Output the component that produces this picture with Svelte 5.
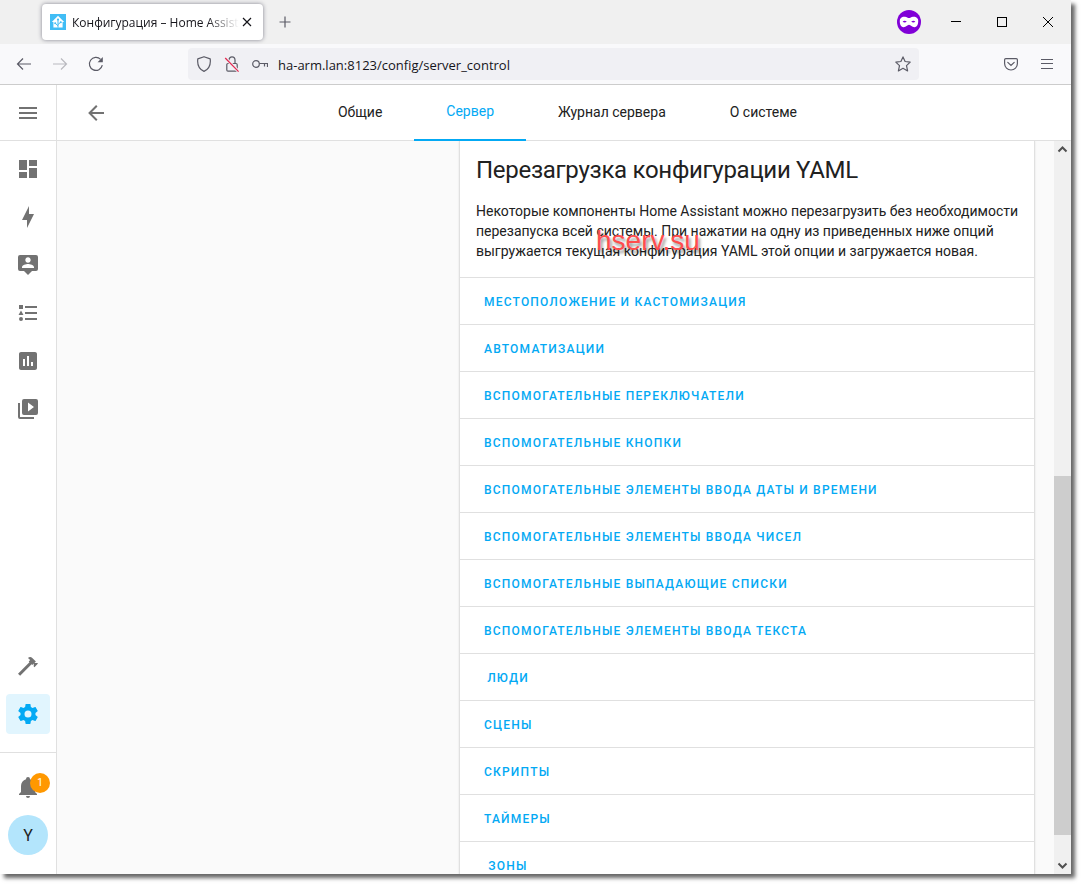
<script lang="ts">
  type Item = { label: string; icon: string };

  const menuIcon = 'M3,6H21V8H3V6M3,11H21V13H3V11M3,16H21V18H3V16Z';
  const backIcon = 'M20,11V13H8L13.5,18.5L12.08,19.92L4.16,12L12.08,4.08L13.5,5.5L8,11H20Z';
  const bellIcon =
    'M21,19V20H3V19L5,17V11C5,7.9 7.03,5.17 10,4.29C10,4.19 10,4.1 10,4A2,2 0 0,1 12,2A2,2 0 0,1 14,4C14,4.1 14,4.19 14,4.29C16.97,5.17 19,7.9 19,11V17L21,19M14,21A2,2 0 0,1 12,23A2,2 0 0,1 10,21';

  const panels: Item[] = [
    { label: 'Обзор', icon: 'M13,3V9H21V3M13,21H21V11H13M3,21H11V15H3M3,13H11V3H3V13Z' },
    { label: 'Энергия', icon: 'M11 15H6L13 1V9H18L11 23V15Z' },
    {
      label: 'Карта',
      icon: 'M20,2H4A2,2 0 0,0 2,4V16A2,2 0 0,0 4,18H8L12,22L16,18H20A2,2 0 0,0 22,16V4A2,2 0 0,0 20,2M12,4.3C13.5,4.3 14.7,5.5 14.7,7C14.7,8.5 13.5,9.7 12,9.7C10.5,9.7 9.3,8.5 9.3,7C9.3,5.5 10.5,4.3 12,4.3M18,15H6V14.1C6,12.1 10,11 12,11C14,11 18,12.1 18,14.1V15Z'
    },
    {
      label: 'Журнал',
      icon: 'M5,9.5L7.5,14H2.5L5,9.5M3,4H7V8H3V4M5,20A2,2 0 0,0 7,18A2,2 0 0,0 5,16A2,2 0 0,0 3,18A2,2 0 0,0 5,20M9,5V7H21V5H9M9,19H21V17H9V19M9,13H21V11H9V13Z'
    },
    {
      label: 'История',
      icon: 'M19 3H5C3.9 3 3 3.9 3 5V19C3 20.1 3.9 21 5 21H19C20.1 21 21 20.1 21 19V5C21 3.9 20.1 3 19 3M9 17H7V10H9V17M13 17H11V7H13V17M17 17H15V13H17V17Z'
    },
    {
      label: 'Медиа',
      icon: 'M4,6H2V20A2,2 0 0,0 4,22H18V20H4V6M20,2H8A2,2 0 0,0 6,4V16A2,2 0 0,0 8,18H20A2,2 0 0,0 22,16V4A2,2 0 0,0 20,2M12,14.5V5.5L18,10L12,14.5Z'
    }
  ];

  const tools: Item[] = [
    {
      label: 'Панель разработчика',
      icon: 'M2,19.63L13.43,8.2L12.72,7.5L14.14,6.07L12,3.89C13.2,2.7 15.09,2.7 16.27,3.89L19.87,7.5L18.45,8.91H21.29L22,9.62L18.45,13.21L17.74,12.5V9.62L16.27,11.04L15.56,10.33L4.13,21.76L2,19.63Z'
    },
    {
      label: 'Конфигурация',
      icon: 'M12,15.5A3.5,3.5 0 0,1 8.5,12A3.5,3.5 0 0,1 12,8.5A3.5,3.5 0 0,1 15.5,12A3.5,3.5 0 0,1 12,15.5M19.43,12.97C19.47,12.65 19.5,12.33 19.5,12C19.5,11.67 19.47,11.34 19.43,11L21.54,9.37C21.73,9.22 21.78,8.95 21.66,8.73L19.66,5.27C19.54,5.05 19.27,4.96 19.05,5.05L16.56,6.05C16.04,5.66 15.5,5.32 14.87,5.07L14.5,2.42C14.46,2.18 14.25,2 14,2H10C9.75,2 9.54,2.18 9.5,2.42L9.13,5.07C8.5,5.32 7.96,5.66 7.44,6.05L4.95,5.05C4.73,4.96 4.46,5.05 4.34,5.27L2.34,8.73C2.21,8.95 2.27,9.22 2.46,9.37L4.57,11C4.53,11.34 4.5,11.67 4.5,12C4.5,12.33 4.53,12.65 4.57,12.97L2.46,14.63C2.27,14.78 2.21,15.05 2.34,15.27L4.34,18.73C4.46,18.95 4.73,19.03 4.95,18.95L7.44,17.94C7.96,18.34 8.5,18.68 9.13,18.93L9.5,21.58C9.54,21.82 9.75,22 10,22H14C14.25,22 14.46,21.82 14.5,21.58L14.87,18.93C15.5,18.67 16.04,18.34 16.56,17.94L19.05,18.95C19.27,19.03 19.54,18.95 19.66,18.73L21.66,15.27C21.78,15.05 21.73,14.78 21.54,14.63L19.43,12.97Z'
    }
  ];

  const tabs = ['Общие', 'Сервер', 'Журнал сервера', 'О системе'];

  const reloadable = [
    'Местоположение и кастомизация',
    'Автоматизации',
    'Вспомогательные переключатели',
    'Вспомогательные кнопки',
    'Вспомогательные элементы ввода даты и времени',
    'Вспомогательные элементы ввода чисел',
    'Вспомогательные выпадающие списки',
    'Вспомогательные элементы ввода текста',
    'Люди',
    'Сцены',
    'Скрипты',
    'Таймеры',
    'Зоны'
  ];

  let activePanel = $state('Конфигурация');
  let activeTab = $state('Сервер');
  let address = $state('ha-arm.lan:8123/config/server_control');
</script>

{#snippet mdi(path: string)}
  <svg class="mdi" viewBox="0 0 24 24" aria-hidden="true"><path d={path} /></svg>
{/snippet}

{#snippet navItem(item: Item)}
  <button
    class="nav-item"
    class:active={activePanel === item.label}
    aria-label={item.label}
    onclick={() => (activePanel = item.label)}
  >
    {@render mdi(item.icon)}
  </button>
{/snippet}

<div class="window">
  <div class="titlebar">
    <div class="browser-tab">
      <svg class="favicon" viewBox="0 0 16 16" aria-hidden="true">
        <rect width="16" height="16" fill="#41bdf5" />
        <path d="M8 1.8 14.2 8H12.6V13.6H3.4V8H1.8Z" fill="#fff" />
        <path d="M8 13.6V6.2M8 11.8 5.4 9.4M8 10.6 10.6 8.2" stroke="#41bdf5" fill="none" />
        <circle cx="8" cy="5.6" r="1.1" fill="#41bdf5" />
        <circle cx="5.2" cy="9.2" r="1" fill="#41bdf5" />
        <circle cx="10.8" cy="8.2" r="1" fill="#41bdf5" />
      </svg>
      <span class="tab-title">Конфигурация – Home Assistant</span>
      <button class="tab-close" aria-label="Закрыть вкладку">
        <svg viewBox="0 0 16 16"><path d="M4 4 12 12M12 4 4 12" stroke="#15141a" stroke-width="1.2" /></svg>
      </button>
    </div>
    <button class="new-tab" aria-label="Новая вкладка">
      <svg viewBox="0 0 16 16"><path d="M8 2.5V13.5M2.5 8H13.5" stroke="#5b5b66" stroke-width="1.2" /></svg>
    </button>
    <svg class="private" viewBox="0 0 24 24" aria-hidden="true">
      <circle cx="12" cy="12" r="12" fill="#8000d7" />
      <path
        fill="#fff"
        fill-rule="evenodd"
        d="M3 9.2C4.4 7 6.2 6.6 8 6.8C9.8 7 10.8 8.1 12 8.1C13.2 8.1 14.2 7 16 6.8C17.8 6.6 19.6 7 21 9.2C21.8 13 20.4 17.2 17.4 17.2C14.8 17.2 13.8 14.8 12 14.8C10.2 14.8 9.2 17.2 6.6 17.2C3.6 17.2 2.2 13 3 9.2ZM5.6 11.8Q7.6 9.8 9.8 11.8Q7.6 13.4 5.6 11.8ZM14.2 11.8Q16.4 9.8 18.4 11.8Q16.4 13.4 14.2 11.8Z"
      />
    </svg>
    <div class="controls">
      <button aria-label="Свернуть">
        <svg viewBox="0 0 10 10"><path d="M0 4.5H10" /></svg>
      </button>
      <button aria-label="Развернуть">
        <svg viewBox="0 0 10 10"><rect x="0.5" y="0.5" width="9" height="9" /></svg>
      </button>
      <button aria-label="Закрыть">
        <svg viewBox="0 0 10 10"><path d="M0 0 10 10M10 0 0 10" /></svg>
      </button>
    </div>
  </div>

  <div class="toolbar">
    <button class="tool" aria-label="Назад">
      <svg viewBox="0 0 16 16"><path d="M15 8H1.5M7 2.5 1.5 8 7 13.5" /></svg>
    </button>
    <button class="tool" aria-label="Вперёд" disabled>
      <svg viewBox="0 0 16 16"><path d="M1 8H14.5M9 2.5 14.5 8 9 13.5" /></svg>
    </button>
    <button class="tool" aria-label="Обновить">
      <svg viewBox="0 0 16 16">
        <path d="M14.3 9.2A6.5 6.5 0 1 1 12.6 3.4" />
        <path d="M14.8 1V6.2H9.6Z" fill="#5b5b66" stroke="none" />
      </svg>
    </button>

    <div class="urlbar">
      <button class="url-icon" aria-label="Защита">
        <svg viewBox="0 0 16 16">
          <path d="M8 .7 14.2 2.9C14.9 8.6 12.9 13.2 8 15.4C3.1 13.2 1.1 8.6 1.8 2.9Z" stroke-linejoin="round" />
        </svg>
      </button>
      <button class="url-icon" aria-label="Соединение не защищено">
        <svg viewBox="0 0 16 16">
          <rect x="2.8" y="7.5" width="10.4" height="7.6" rx="1.2" />
          <path d="M5 7.5V4A3 3.2 0 0 1 11 4V7.5" />
          <path d="M1.5 2.2 14.5 15.4" stroke="#f0f0f4" stroke-width="3" />
          <path d="M1.2 2 14.6 15.6" stroke="#e22850" />
        </svg>
      </button>
      <button class="url-icon" aria-label="Пароль">
        <svg viewBox="0 0 16 16"><circle cx="4" cy="8" r="3.3" /><path d="M7.3 7.5H15.5V11M12.5 7.5V10.5" /></svg>
      </button>
      <input type="text" aria-label="Адрес" spellcheck="false" bind:value={address} />
      <button class="url-icon" aria-label="Добавить в закладки">
        <svg viewBox="0 0 16 16">
          <path
            d="M8 .9 10.1 5.5 15.2 6.1 11.5 9.6 12.6 14.9 8 12.3 3.4 14.9 4.5 9.6 .8 6.1 5.9 5.5Z"
            stroke-linejoin="round"
          />
        </svg>
      </button>
    </div>

    <button class="tool" aria-label="Pocket">
      <svg viewBox="0 0 16 16">
        <path d="M2.8 2.6H13.2Q14.4 2.6 14.4 3.8V7.6A6.4 6.4 0 0 1 1.6 7.6V3.8Q1.6 2.6 2.8 2.6Z" />
        <path d="M4.8 6.4 8 9.5 11.2 6.4" stroke-linecap="round" />
      </svg>
    </button>
    <button class="tool" aria-label="Меню">
      <svg viewBox="0 0 16 16"><path d="M2 3.5H14M2 7.5H14M2 12.5H14" /></svg>
    </button>
  </div>

  <div class="app">
    <aside class="sidebar">
      <div class="sidebar-head">
        <button class="icon-button" aria-label="Боковая панель">{@render mdi(menuIcon)}</button>
      </div>
      <nav class="nav">
        {#each panels as item}
          {@render navItem(item)}
        {/each}
        <div class="spacer"></div>
        {#each tools as item}
          {@render navItem(item)}
        {/each}
      </nav>
      <div class="user">
        <button class="nav-item" aria-label="Уведомления">
          {@render mdi(bellIcon)}
          <span class="badge">1</span>
        </button>
        <button class="avatar">Y</button>
      </div>
    </aside>

    <main class="main">
      <header class="header">
        <button class="icon-button" aria-label="Назад">{@render mdi(backIcon)}</button>
        <div class="tabs" role="tablist">
          {#each tabs as tab}
            <button
              class="tab"
              class:active={activeTab === tab}
              role="tab"
              aria-selected={activeTab === tab}
              onclick={() => (activeTab = tab)}
            >
              {tab}
            </button>
          {/each}
        </div>
      </header>

      <div class="view">
        <div class="content">
          <section class="card">
            <h1>Перезагрузка конфигурации YAML</h1>
            <div class="description">
              <p>
                Некоторые компоненты Home Assistant можно перезагрузить без необходимости перезапуска
                всей системы. При нажатии на одну из приведенных ниже опций выгружается текущая
                конфигурация YAML этой опции и загружается новая.
              </p>
              <span class="watermark">hserv.su</span>
            </div>
            {#each reloadable as name}
              <div class="row">
                <button class="action">{name}</button>
              </div>
            {/each}
          </section>
        </div>

        <div class="scrollbar" aria-hidden="true">
          <svg viewBox="0 0 17 17"><path d="M4.5 10.5 8.5 6.5 12.5 10.5" /></svg>
          <div class="track">
            <div class="thumb"></div>
          </div>
          <svg viewBox="0 0 17 17"><path d="M4.5 6.5 8.5 10.5 12.5 6.5" /></svg>
        </div>
      </div>
    </main>
  </div>
</div>

<style>
  :global(body) {
    background: #fff;
  }

  :global(#app) {
    display: flex;
    box-sizing: border-box;
    height: 100vh;
    padding: 0 15px 15px 0;
  }

  * {
    box-sizing: border-box;
  }

  button {
    display: flex;
    align-items: center;
    justify-content: center;
    flex-shrink: 0;
    margin: 0;
    padding: 0;
    border: 0;
    background: none;
    color: inherit;
    font: inherit;
    cursor: pointer;
  }

  svg {
    display: block;
    flex-shrink: 0;
  }

  .window {
    display: flex;
    flex-direction: column;
    flex: 1;
    min-width: 0;
    background: #fff;
    box-shadow: 4px 4px 4px rgba(0, 0, 0, 0.6);
    font-family: Roboto, sans-serif;
    font-size: 14px;
    color: #212121;
  }

  /* Browser chrome */
  .titlebar {
    display: flex;
    align-items: center;
    height: 44px;
    padding-left: 42px;
    background: #f0f0f0;
    font-family: 'Open Sans', sans-serif;
    font-size: 12px;
    color: #15141a;
  }

  .browser-tab {
    display: flex;
    align-items: center;
    width: 221px;
    height: 36px;
    padding: 0 8px;
    border-radius: 4px;
    background: #fff;
    box-shadow: 0 0 4px rgba(60, 60, 80, 0.6);
  }

  .favicon {
    width: 16px;
    height: 16px;
    margin-right: 6px;
  }

  .tab-title {
    flex: 1;
    min-width: 0;
    overflow: hidden;
    white-space: nowrap;
    mask-image: linear-gradient(to left, transparent, #000 32px);
  }

  .tab-close,
  .tab-close svg {
    width: 16px;
    height: 16px;
  }

  .new-tab {
    width: 44px;
    height: 36px;
  }

  .new-tab svg {
    width: 16px;
    height: 16px;
  }

  .private {
    width: 24px;
    height: 24px;
    margin: 0 12px 0 auto;
  }

  .controls {
    display: flex;
    height: 100%;
  }

  .controls button {
    width: 46px;
  }

  .controls svg {
    width: 10px;
    height: 10px;
    fill: none;
    stroke: #000;
  }

  .toolbar {
    display: flex;
    align-items: center;
    height: 41px;
    padding: 0 6px;
    border-bottom: 1px solid #ccc;
    background: #f9f9fb;
  }

  .tool {
    width: 36px;
    height: 32px;
  }

  .tool:disabled {
    opacity: 0.4;
  }

  .tool svg,
  .url-icon svg {
    width: 16px;
    height: 16px;
    fill: none;
    stroke: #5b5b66;
    stroke-width: 1.2;
  }

  .urlbar {
    display: flex;
    align-items: center;
    flex: 1;
    min-width: 0;
    height: 32px;
    margin: 0 74px;
    padding: 0 2px;
    border-radius: 4px;
    background: #f0f0f4;
  }

  .url-icon {
    width: 28px;
    height: 28px;
  }

  .urlbar input {
    flex: 1;
    min-width: 0;
    padding: 2px 4px 0;
    border: 0;
    outline: 0;
    background: none;
    font-family: 'Open Sans', sans-serif;
    font-size: 13px;
    color: #15141a;
  }

  /* Home Assistant */
  .app {
    display: flex;
    flex: 1;
    min-height: 0;
  }

  .mdi {
    width: 24px;
    height: 24px;
    fill: currentColor;
  }

  .icon-button {
    width: 48px;
    height: 48px;
    color: #727272;
  }

  .sidebar {
    display: flex;
    flex-direction: column;
    width: 57px;
    border-right: 1px solid #e0e0e0;
    background: #fff;
  }

  .sidebar-head {
    display: flex;
    align-items: center;
    height: 56px;
    padding: 0 4px;
    border-bottom: 1px solid #e0e0e0;
  }

  .nav {
    display: flex;
    flex-direction: column;
    flex: 1;
    gap: 8px;
    min-height: 0;
    padding: 8px 6px 18px;
  }

  .spacer {
    flex: 1;
  }

  .nav-item {
    position: relative;
    width: 44px;
    height: 40px;
    border-radius: 4px;
    color: #727272;
  }

  .nav-item.active {
    background: #e1f5fe;
    color: #03a9f4;
  }

  .user {
    display: flex;
    flex-direction: column;
    align-items: center;
    gap: 8px;
    padding: 14px 6px 19px;
    border-top: 1px solid #e0e0e0;
  }

  .badge {
    position: absolute;
    top: 6px;
    right: 0;
    width: 20px;
    height: 20px;
    border-radius: 50%;
    background: #ff9800;
    color: #fff;
    font-size: 10px;
    line-height: 20px;
    text-align: center;
  }

  .avatar {
    width: 40px;
    height: 40px;
    border-radius: 50%;
    background: #b3e5fc;
    font-size: 16px;
  }

  .main {
    display: flex;
    flex-direction: column;
    flex: 1;
    min-width: 0;
  }

  .header {
    display: flex;
    align-items: center;
    height: 56px;
    padding: 0 56px 0 15px;
    border-bottom: 1px solid #e0e0e0;
    background: #fff;
  }

  .tabs {
    display: flex;
    flex: 1;
    justify-content: center;
    height: 56px;
  }

  .tab {
    height: 56px;
    padding: 0 32px 2px;
  }

  .tab.active {
    border-bottom: 2px solid #03a9f4;
    color: #03a9f4;
  }

  .view {
    display: flex;
    flex: 1;
    min-height: 0;
    background: #fafafa;
  }

  .content {
    display: grid;
    grid-template-columns: 382px 1fr;
    flex: 1;
    min-width: 0;
    padding: 0 19px 0 20px;
    overflow: hidden;
  }

  .card {
    grid-column: 2;
    border: 1px solid #e0e0e0;
    border-width: 0 1px;
    background: #fff;
    box-shadow: 0 0 2px rgba(0, 0, 0, 0.1);
  }

  h1 {
    margin: 0;
    padding: 5px 16px 7px;
    font-size: 24px;
    font-weight: 400;
    letter-spacing: -0.012em;
    line-height: 48px;
  }

  .description {
    position: relative;
    padding: 0 12px 16px 16px;
    line-height: 20px;
  }

  p {
    margin: 0;
  }

  .watermark {
    position: absolute;
    top: 24px;
    left: 136px;
    color: #ff4d4d;
    font-family: 'Liberation Sans', sans-serif;
    font-size: 28px;
    line-height: 32px;
    text-shadow: 2px 3px 3px rgba(0, 0, 0, 0.4);
  }

  .row {
    display: flex;
    align-items: center;
    height: 47px;
    padding: 2px 16px 0;
    border-top: 1px solid #e0e0e0;
  }

  .action {
    min-width: 64px;
    height: 36px;
    padding: 0 8px;
    color: #03a9f4;
    font-size: 12px;
    font-weight: 500;
    letter-spacing: 0.1em;
    text-transform: uppercase;
  }

  .scrollbar {
    display: flex;
    flex-direction: column;
    width: 17px;
    background: #f0f0f0;
  }

  .scrollbar svg {
    width: 17px;
    height: 17px;
    fill: none;
    stroke: #505050;
    stroke-width: 2;
  }

  .track {
    display: grid;
    grid-template-rows: 318fr 359fr 22fr;
    flex: 1;
  }

  .thumb {
    grid-row: 2;
    background: #cdcdcd;
  }
</style>
